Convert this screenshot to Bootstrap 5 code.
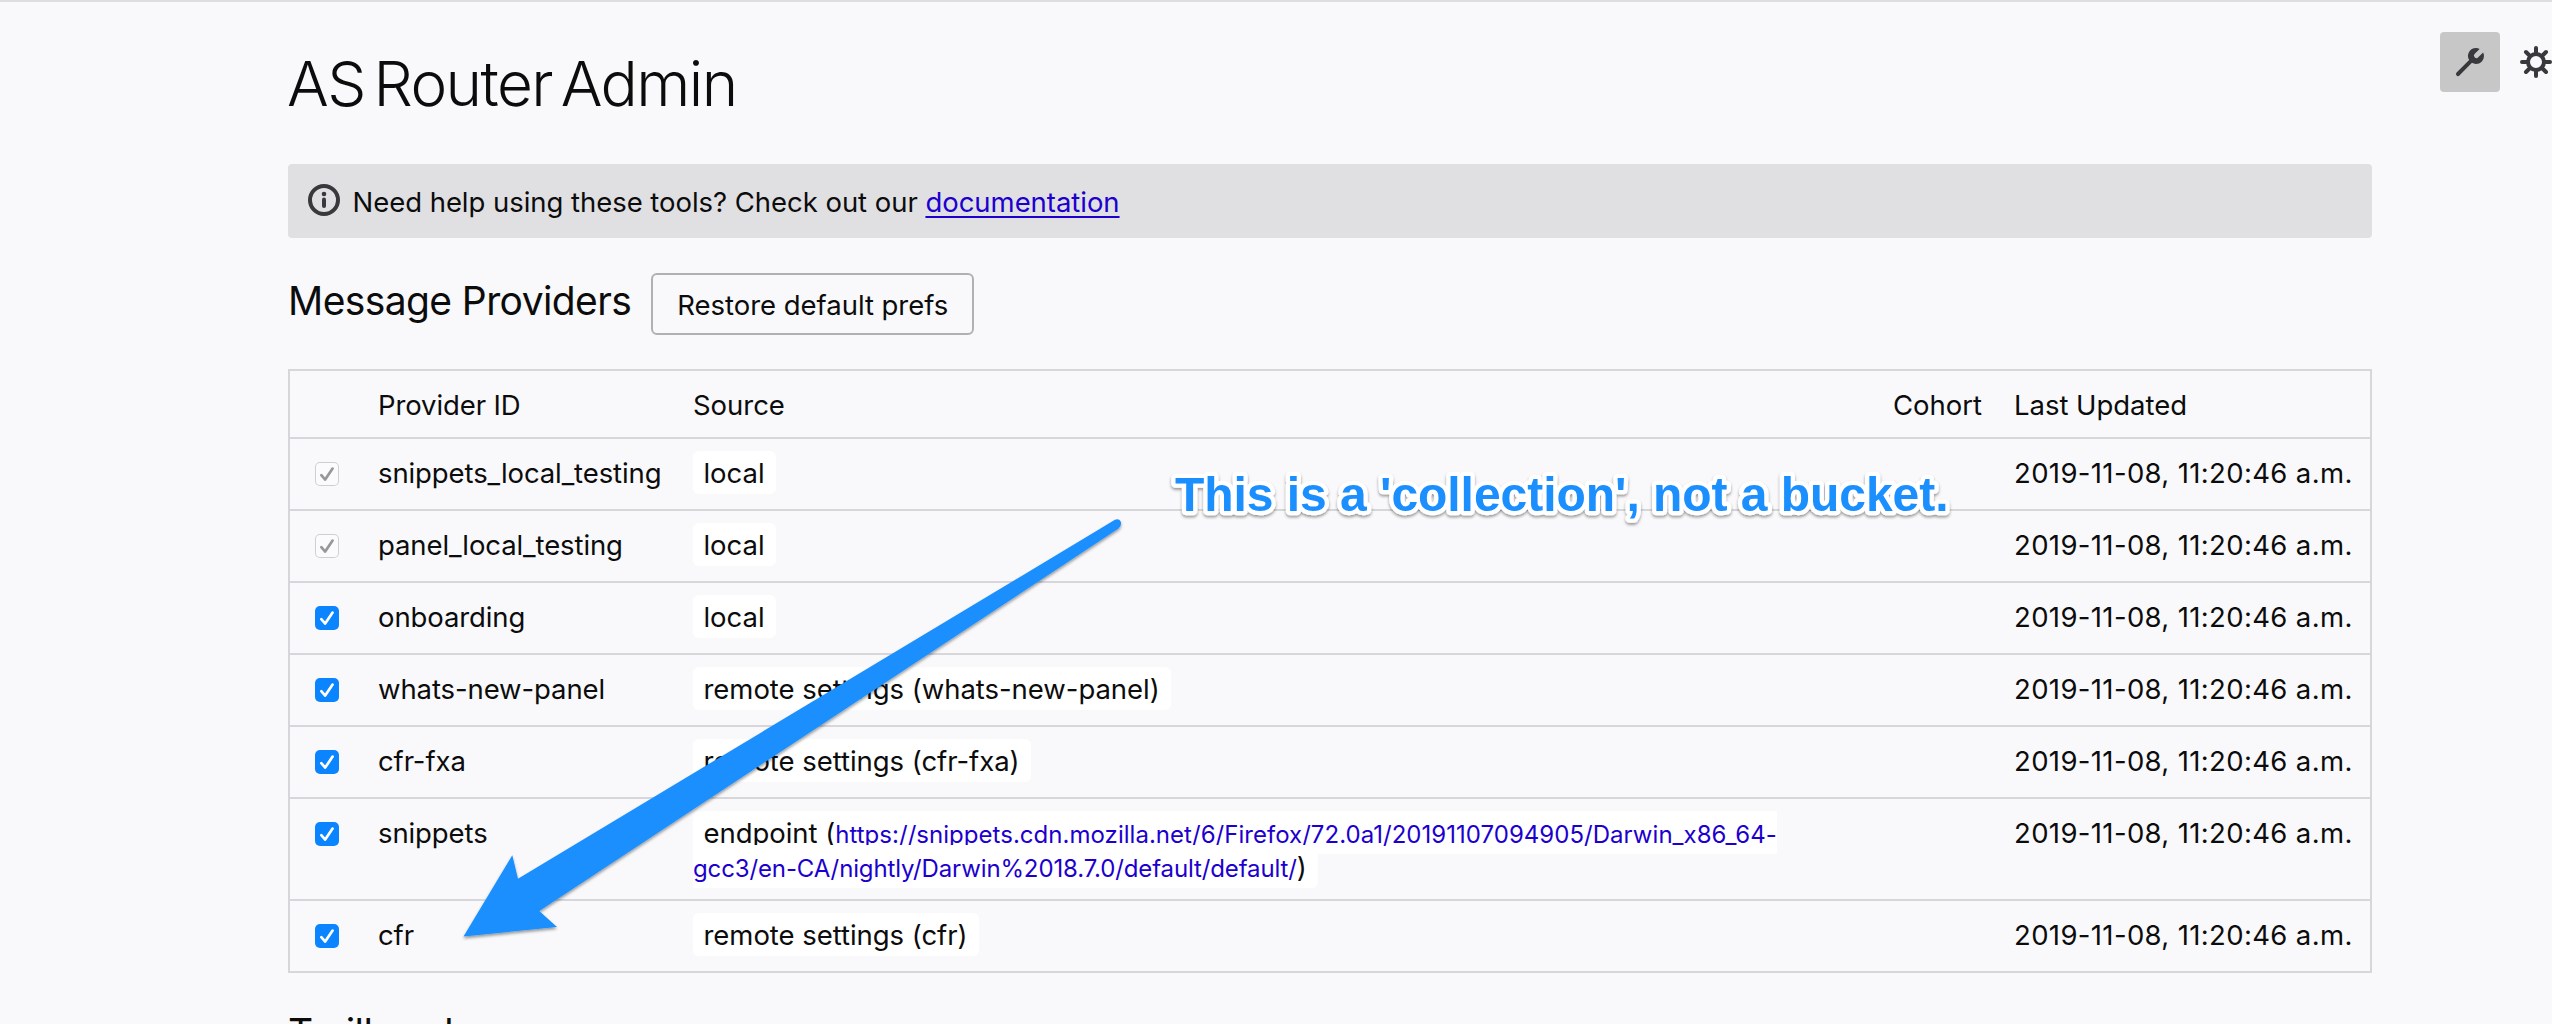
<!DOCTYPE html>
<html lang="en">
<head>
<meta charset="utf-8">
<meta name="viewport" content="width=device-width, initial-scale=1">
<title>AS Router Admin</title>
<link href="https://cdn.jsdelivr.net/npm/bootstrap@5.3.0/dist/css/bootstrap.min.css" rel="stylesheet">
<style>
  body { height: 1024px; overflow: hidden; background: #f9f9fb; color: #0c0c0d; font-family: Inter, "Noto Sans", sans-serif; font-size: 27.5px; line-height: 34px; letter-spacing: -.04px; border-top: 2px solid #dededf; }
  main { width: 2084px; margin-left: 288px; padding-top: 42px; }
  h1 { font-size: 62px; line-height: 80px; font-weight: 300; letter-spacing: -1.6px; word-spacing: -7px; margin: 0 0 40px -1px; }
  h2 { font-size: 39px; line-height: 48px; font-weight: 400; letter-spacing: -.6px; margin: 0; }
  a { color: #1c00cf; text-decoration: none; }
  .help-bar { height: 74px; background: #e0e0e2; border-radius: 4px; padding: 20px 20px 0; gap: 12.5px; }
  .help-bar div { padding-top: 1px; }
  .help-bar a { text-decoration: underline; text-decoration-thickness: 2px; text-underline-offset: 4px; text-decoration-skip-ink: none; }
  .heading-row { margin: 35px 0 34px; gap: 20px; }
  .btn-restore { height: 62px; width: 323px; border: 2px solid #b1b1b3; border-radius: 6px; font-size: inherit; line-height: 34px; letter-spacing: -.04px; padding: 13px 0 11px; color: #0c0c0d; }
  .providers { width: 2084px; table-layout: fixed; border: 2px solid #d7d7db; border-collapse: separate; border-spacing: 0; margin: 0 0 36px; }
  .providers th, .providers td { padding: 17px 0 0; height: 72px; font-weight: 400; vertical-align: top; text-align: left; white-space: nowrap; border-bottom: 2px solid #d7d7db; }
  .providers th { height: 68px; padding-top: 16.5px; }
  .providers .tall td { height: 102px; }
  .providers tr:last-child td { height: 70px; border-bottom: 0; }
  .providers thead tr:last-child th { border-bottom: 2px solid #d7d7db; }
  .providers th:nth-child(2), .providers td:nth-child(2) { letter-spacing: -.1px; }
  .providers td:last-child { letter-spacing: .36px; }
  .providers td:first-child { padding: 23px 0 0 25px; }
  .tick { display: block; width: 24px; height: 24px; border-radius: 5px; background: #0a84ff; color: #fff; }
  .tick.off { background: #fbfbfd; color: #98989b; box-shadow: inset 0 0 0 1px #cfcfd1; }
  .src { background: #fff; border-radius: 6px; padding: 5px 11px 4px 10.5px; }
  .src a { font-size: 24px; line-height: 1; letter-spacing: .03px; }
  .src a .path-end { letter-spacing: -.13px; }
  .tools { right: 0; top: 30px; gap: 20px; }
  .tool-btn { width: 60px; height: 60px; border-radius: 4px; background: #c7c7c8; }
  .note-layer { left: 0; top: -2px; pointer-events: none; }
</style>
<script src="https://cdn.jsdelivr.net/npm/bootstrap@5.3.0/dist/js/bootstrap.bundle.min.js"></script>
</head>
<body class="position-relative">
<svg class="d-none"><symbol id="check" viewBox="0 0 24 24"><path d="M6.3 13.2 10.2 17.6 17.6 6.6" fill="none" stroke="currentColor" stroke-width="2.7" stroke-linecap="round" stroke-linejoin="round"/></symbol></svg>

<main>
  <h1>AS Router Admin</h1>
  <div class="help-bar d-flex">
    <svg width="32" height="32" viewBox="-16 -16 32 32" fill="#38383d"><circle r="14" fill="none" stroke="#38383d" stroke-width="4"/><circle cy="-6" r="2.3"/><rect x="-2" y="-2.4" width="4" height="10.4" rx="2"/></svg>
    <div>Need help using these tools? Check out our <a href="#">documentation</a></div>
  </div>

  <div class="heading-row d-flex align-items-start">
    <h2 class="pt-1">Message Providers</h2>
    <button class="btn btn-restore" type="button">Restore default prefs</button>
  </div>

  <table class="providers">
    <colgroup><col style="width:88px"><col style="width:315px"><col style="width:1200px"><col style="width:121px"><col></colgroup>
    <thead><tr><th></th><th>Provider ID</th><th>Source</th><th>Cohort</th><th>Last Updated</th></tr></thead>
    <tbody>
      <tr><td><svg class="tick off"><use href="#check"/></svg></td><td>snippets_local_testing</td><td><span class="src">local</span></td><td></td><td>2019-11-08, 11:20:46 a.m.</td></tr>
      <tr><td><svg class="tick off"><use href="#check"/></svg></td><td>panel_local_testing</td><td><span class="src">local</span></td><td></td><td>2019-11-08, 11:20:46 a.m.</td></tr>
      <tr><td><svg class="tick"><use href="#check"/></svg></td><td>onboarding</td><td><span class="src">local</span></td><td></td><td>2019-11-08, 11:20:46 a.m.</td></tr>
      <tr><td><svg class="tick"><use href="#check"/></svg></td><td>whats-new-panel</td><td><span class="src">remote settings (whats-new-panel)</span></td><td></td><td>2019-11-08, 11:20:46 a.m.</td></tr>
      <tr><td><svg class="tick"><use href="#check"/></svg></td><td>cfr-fxa</td><td><span class="src">remote settings (cfr-fxa)</span></td><td></td><td>2019-11-08, 11:20:46 a.m.</td></tr>
      <tr class="tall"><td><svg class="tick"><use href="#check"/></svg></td><td>snippets</td><td><span class="src">endpoint (<a href="#">https://snippets.cdn.mozilla.net/6/Firefox/72.0a1/20191107094905/Darwin_x86_64-<br><span class="path-end">gcc3/en-CA/nightly/Darwin%2018.7.0/default/default/</span></a>)</span></td><td></td><td>2019-11-08, 11:20:46 a.m.</td></tr>
      <tr><td><svg class="tick"><use href="#check"/></svg></td><td>cfr</td><td><span class="src">remote settings (cfr)</span></td><td></td><td>2019-11-08, 11:20:46 a.m.</td></tr>
    </tbody>
  </table>

  <h2>Trailhead</h2>
</main>

<div class="tools position-absolute d-flex align-items-center">
  <div class="tool-btn d-flex align-items-center justify-content-center">
    <svg width="32" height="32" viewBox="0 0 16 16" fill="#38383d"><path d="M14.555 3.2l-2.434 2.436a1.243 1.243 0 1 1-1.757-1.757L12.8 1.445A3.956 3.956 0 0 0 11 1a3.976 3.976 0 0 0-3.434 6.02l-6.273 6.273a1 1 0 1 0 1.414 1.414L8.98 8.434A3.96 3.96 0 0 0 11 9a4 4 0 0 0 4-4 3.956 3.956 0 0 0-.445-1.8z"/></svg>
  </div>
  <svg width="32" height="32" viewBox="-16 -16 32 32" fill="none" stroke="#38383d" stroke-width="4" stroke-linecap="round"><circle r="8"/><path d="M0-9.5V-14M0 9.5V14M-9.5 0H-14M9.5 0H14M-7-7-10-10M7-7 10-10M-7 7-10 10M7 7 10 10"/></svg>
</div>

<!-- Annotation: arrow and caption over the table -->
<svg class="note-layer position-absolute" width="2552" height="1024" viewBox="0 0 2552 1024">
  <defs><filter id="soft" x="-5%" y="-10%" width="110%" height="130%"><feDropShadow dx="0" dy="2" stdDeviation="1.4" flood-color="#000" flood-opacity=".4"/></filter></defs>
  <path filter="url(#soft)" fill="#1a8fff" d="M463.500 936.500 512.300 855.300 518 878.700 1115 519.800Q1119.500 518.200 1121 522.500 1121.500 526 1118.500 528.500L539.300 911 557 927Z"/>
  <text filter="url(#soft)" x="1175" y="511" fill="#1a8fff" stroke="#fff" stroke-width="8.500" stroke-linejoin="round" paint-order="stroke" font-family="Liberation Sans, sans-serif" font-weight="700" font-size="48">This is a 'collection', not a bucket.</text>
</svg>
</body>
</html>
